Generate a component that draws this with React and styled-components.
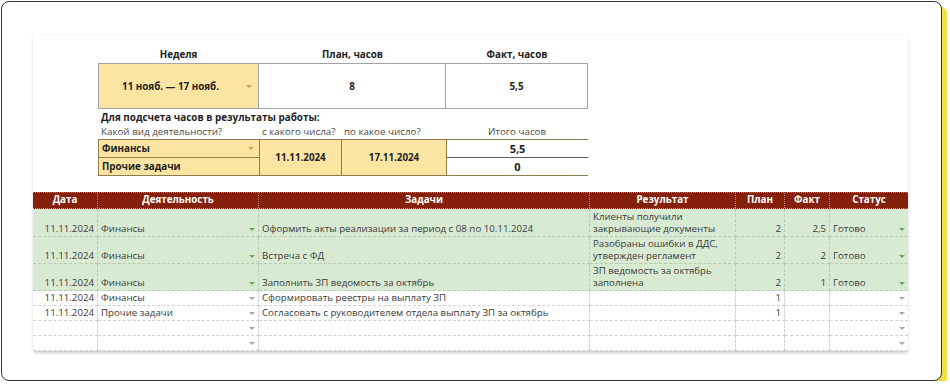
import React from "react";
import styled, { createGlobalStyle } from "styled-components";

const GlobalStyle = createGlobalStyle`
  body {
    margin: 0;
    background: #fff;
    font-family: "Open Sans", "Noto Sans", sans-serif;
    color: #3a3a3a;
  }
`;

const COLS = "65px 161px 331px 146px 49px 45px 78px";

const Frame = styled.div`
  box-sizing: border-box;
  width: 941px;
  height: 380px;
  margin: 1px 0 0 1px;
  padding: 33px 0 0 31px;
  border: 1px solid #353535;
  border-radius: 8px;
  box-shadow: 5px 5px 1px #f4df3b;
  background: #fff;
`;

const Sheet = styled.div`
  width: 875px;
  padding-top: 12px;
  background: #fff;
  box-shadow: 0 3px 3px -1px rgba(0, 0, 0, 0.2), 1px 0 2px rgba(0, 0, 0, 0.05),
    -1px 0 2px rgba(0, 0, 0, 0.05);
`;

const Summary = styled.div`
  margin-left: 65px;
  width: 490px;
`;

const WeekGrid = styled.div`
  display: grid;
  grid-template-columns: 161px 187px 142px;
`;

const HeadLabel = styled.div`
  height: 16px;
  font-size: 9.8px;
  font-weight: 700;
  color: #222;
  text-align: center;
  line-height: 16px;
`;

const WeekCell = styled.div`
  box-sizing: border-box;
  height: 46px;
  display: flex;
  align-items: center;
  justify-content: center;
  font-size: 9.8px;
  font-weight: 700;
  color: #222;
  background: ${({ $yellow }) => ($yellow ? "#fce5a2" : "#fff")};
  border: 1px solid #a3a3a3;
  border-left-width: ${({ $first }) => ($first ? "1px" : "0")};
  padding-right: ${({ $arrow }) => ($arrow ? "16px" : "0")};
  position: relative;
`;

const Note = styled.div`
  padding: 1px 0 0 3px;
  height: 14px;
  line-height: 14px;
  font-size: 9.9px;
  font-weight: 700;
  color: #1f1f1f;
`;

const SubLabels = styled.div`
  display: grid;
  grid-template-columns: 161px 82px 105px 142px;
  height: 15px;
  line-height: 15px;
  font-size: 9.8px;
  color: #4a4a4a;
`;

const SubLabel = styled.div`
  padding-left: ${({ $center }) => ($center ? "0" : "3px")};
  text-align: ${({ $center }) => ($center ? "center" : "left")};
  white-space: nowrap;
`;

const TotalsGrid = styled.div`
  display: grid;
  grid-template-columns: 161px 82px 105px 142px;
  grid-template-rows: 18px 17px;
  border: 1px solid #8d7d4d;
  border-right-color: #5f5f5f;
  box-sizing: border-box;
  height: 37px;
`;

const TotalsCell = styled.div`
  display: flex;
  align-items: center;
  justify-content: ${({ $center }) => ($center ? "center" : "flex-start")};
  padding: 0 ${({ $center }) => ($center ? "0" : "3px")};
  grid-row: ${({ $span }) => ($span ? "1 / span 2" : "auto")};
  background: ${({ $white }) => ($white ? "#fff" : "#fce5a2")};
  border-right: 1px solid ${({ $white }) => ($white ? "transparent" : "#8d7d4d")};
  border-bottom: ${({ $line, $white }) =>
    $line ? `1px solid ${$white ? "#5f5f5f" : "#8d7d4d"}` : "none"};
  font-size: ${({ $big }) => ($big ? "11px" : "9.8px")};
  font-weight: 700;
  color: #1f1f1f;
`;

const Table = styled.div`
  margin-top: 16px;
`;

const HeadRow = styled.div`
  display: grid;
  grid-template-columns: ${COLS};
  height: 15px;
  background: #85200c;
  border-top: 1px dotted #b8766a;
  border-bottom: 1px dotted #c49488;
`;

const HeadCell = styled.div`
  color: #fff;
  font-size: 9.8px;
  font-weight: 700;
  text-align: center;
  line-height: 14px;
  border-right: 1px dotted rgba(255, 255, 255, 0.45);
  &:last-child {
    border-right: none;
  }
`;

const Row = styled.div`
  display: grid;
  grid-template-columns: ${COLS};
  height: ${({ $h }) => $h}px;
  background: ${({ $done }) => ($done ? "#d9ead3" : "#fff")};
`;

const Cell = styled.div`
  box-sizing: border-box;
  display: flex;
  align-items: flex-end;
  justify-content: ${({ $right }) => ($right ? "flex-end" : "flex-start")};
  padding: 0 3px 1px 3px;
  font-size: 9.7px;
  line-height: 12px;
  color: #3a3a3a;
  white-space: pre-line;
  overflow: hidden;
  border-right: 1px dashed ${({ $done }) => ($done ? "#b9c9b2" : "#d2d2d2")};
  border-bottom: 1px dashed ${({ $done }) => ($done ? "#b9c9b2" : "#d2d2d2")};
  &:last-child {
    border-right: none;
  }
`;

const Arrow = styled.span`
  flex: none;
  margin-left: auto;
  margin-bottom: 4px;
  width: 0;
  height: 0;
  border-left: 3px solid transparent;
  border-right: 3px solid transparent;
  border-top: 3px solid ${({ $tone }) => $tone};
`;

const WeekArrow = styled.span`
  position: absolute;
  right: 6px;
  top: 21px;
  width: 0;
  height: 0;
  border-left: 3px solid transparent;
  border-right: 3px solid transparent;
  border-top: 3px solid #c9a24a;
`;

const FinArrow = styled.span`
  margin-left: auto;
  margin-right: 2px;
  width: 0;
  height: 0;
  border-left: 3px solid transparent;
  border-right: 3px solid transparent;
  border-top: 3px solid #c9a24a;
`;

const rows = [
  {
    date: "11.11.2024",
    act: "Финансы",
    task: "Оформить акты реализации за период с 08 по 10.11.2024",
    result: "Клиенты получили\nзакрывающие документы",
    plan: "2",
    fact: "2,5",
    status: "Готово",
    done: true,
    h: 28,
  },
  {
    date: "11.11.2024",
    act: "Финансы",
    task: "Встреча с ФД",
    result: "Разобраны ошибки в ДДС,\nутвержден регламент",
    plan: "2",
    fact: "2",
    status: "Готово",
    done: true,
    h: 27,
  },
  {
    date: "11.11.2024",
    act: "Финансы",
    task: "Заполнить ЗП ведомость за октябрь",
    result: "ЗП ведомость за октябрь\nзаполнена",
    plan: "2",
    fact: "1",
    status: "Готово",
    done: true,
    h: 27,
  },
  {
    date: "11.11.2024",
    act: "Финансы",
    task: "Сформировать реестры на выплату ЗП",
    result: "",
    plan: "1",
    fact: "",
    status: "",
    h: 15,
  },
  {
    date: "11.11.2024",
    act: "Прочие задачи",
    task: "Согласовать с руководителем отдела выплату ЗП за октябрь",
    result: "",
    plan: "1",
    fact: "",
    status: "",
    h: 15,
  },
  { date: "", act: "", task: "", result: "", plan: "", fact: "", status: "", h: 15 },
  { date: "", act: "", task: "", result: "", plan: "", fact: "", status: "", h: 15 },
];

const heads = ["Дата", "Деятельность", "Задачи", "Результат", "План", "Факт", "Статус"];

export default function App() {
  return (
    <>
      <GlobalStyle />
      <Frame>
        <Sheet>
          <Summary>
            <WeekGrid>
              <HeadLabel>Неделя</HeadLabel>
              <HeadLabel>План, часов</HeadLabel>
              <HeadLabel>Факт, часов</HeadLabel>
              <WeekCell $yellow $first $arrow>
                11 нояб. — 17 нояб.
                <WeekArrow />
              </WeekCell>
              <WeekCell>8</WeekCell>
              <WeekCell>5,5</WeekCell>
            </WeekGrid>
            <Note>Для подсчета часов в результаты работы:</Note>
            <SubLabels>
              <SubLabel>Какой вид деятельности?</SubLabel>
              <SubLabel>с какого числа?</SubLabel>
              <SubLabel>по какое число?</SubLabel>
              <SubLabel $center>Итого часов</SubLabel>
            </SubLabels>
            <TotalsGrid>
              <TotalsCell $line>
                Финансы
                <FinArrow />
              </TotalsCell>
              <TotalsCell $center $span style={{ gridColumn: 2 }}>
                11.11.2024
              </TotalsCell>
              <TotalsCell $center $span style={{ gridColumn: 3 }}>
                17.11.2024
              </TotalsCell>
              <TotalsCell $center $white $big $line>
                5,5
              </TotalsCell>
              <TotalsCell style={{ gridColumn: 1, gridRow: 2 }}>Прочие задачи</TotalsCell>
              <TotalsCell $center $white $big style={{ gridColumn: 4, gridRow: 2 }}>
                0
              </TotalsCell>
            </TotalsGrid>
          </Summary>

          <Table>
            <HeadRow>
              {heads.map((h) => (
                <HeadCell key={h}>{h}</HeadCell>
              ))}
            </HeadRow>
            {rows.map((r, i) => {
              const tone = r.done ? "#6aa84f" : "#a8a8a8";
              return (
                <Row key={i} $h={r.h} $done={r.done}>
                  <Cell $done={r.done} $right>
                    {r.date}
                  </Cell>
                  <Cell $done={r.done}>
                    {r.act}
                    <Arrow $tone={tone} />
                  </Cell>
                  <Cell $done={r.done}>{r.task}</Cell>
                  <Cell $done={r.done}>{r.result}</Cell>
                  <Cell $done={r.done} $right>
                    {r.plan}
                  </Cell>
                  <Cell $done={r.done} $right>
                    {r.fact}
                  </Cell>
                  <Cell $done={r.done}>
                    {r.status}
                    <Arrow $tone={tone} />
                  </Cell>
                </Row>
              );
            })}
          </Table>
        </Sheet>
      </Frame>
    </>
  );
}
